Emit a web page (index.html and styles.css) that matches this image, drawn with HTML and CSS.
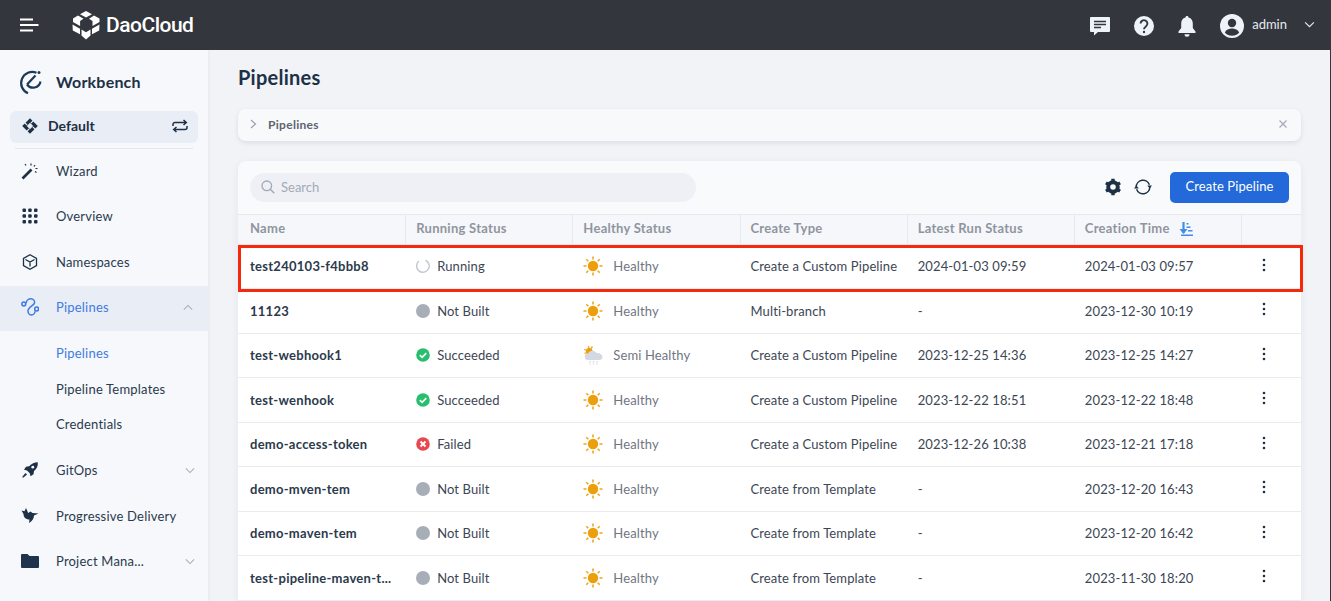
FILE: index.html
```html
<!DOCTYPE html>
<html lang="en">
<head>
    <meta charset="UTF-8">
    <title>Pipelines</title>
    <link rel="stylesheet" href="styles.css">
</head>
<body>
    <svg class="defs" width="0" height="0">
        <symbol id="sun" viewBox="0 0 20 20">
            <circle cx="10" cy="10" r="5.2" fill="#eb9f0c"/>
            <path d="M10 .5v3M10 16.5v3M.5 10h3M16.5 10h3M3.300 3.300l2 2M14.700 14.700l2 2M3.300 16.700l2-2M14.700 5.300l2-2" stroke="#eda622" stroke-width="1.6" fill="none"/>
        </symbol>
        <symbol id="kebab" viewBox="0 0 4 14">
            <circle cx="2" cy="2" r="1.3"/><circle cx="2" cy="7" r="1.3"/><circle cx="2" cy="12" r="1.3"/>
        </symbol>
        <symbol id="chev" viewBox="0 0 12 8">
            <path d="M1 1.500l5 5 5-5" fill="none" stroke="currentColor" stroke-width="1.3"/>
        </symbol>
    </svg>

    <header class="topbar">
        <svg class="menu-icon" viewBox="0 0 19 14" width="19" height="14"><path d="M0 1.500h13M0 7h18.500M0 12.500h13" stroke="#fff" stroke-width="1.8"/></svg>
        <svg class="logo" viewBox="0 0 28 29" width="28" height="29">
            <path d="M14 0l6 3.200-6 3.400-6-3.400zM6 4.600l5.500 3.200-3.400 2.200v5L1 11V7.600zM22 4.600l5.500 3V11l-7 4v-5L17 7.800zM.5 13.400l7.500 4.400v5.500L.8 19.500zM27.500 13.400l-.3 6.100-7.200 3.800v-5.500zM9.500 18.600l4.500 2.600 4.500-2.600v5.800L14 28.600l-4.500-4.200z" fill="#fff"/>
        </svg>
        <span class="brand">DaoCloud</span>
        <div class="top-right">
            <svg class="top-icon" viewBox="0 0 22 20" width="22" height="20"><path d="M2 1h18a1 1 0 0 1 1 1v13a1 1 0 0 1-1 1H9l-4 3.500V16H2a1 1 0 0 1-1-1V2a1 1 0 0 1 1-1z" fill="#eef3fa"/><path d="M5 5.500h12M5 8.500h12M5 11.500h7" stroke="#33363c" stroke-width="1.5"/></svg>
            <svg class="top-icon" viewBox="0 0 20 20" width="20" height="20"><circle cx="10" cy="10" r="10" fill="#eef3fa"/><path d="M6.600 7.600a3.400 3.400 0 1 1 5.300 2.800c-1.300.9-1.900 1.300-1.900 2.800" fill="none" stroke="#33363c" stroke-width="1.9"/><circle cx="10" cy="16" r="1.2" fill="#33363c"/></svg>
            <svg class="top-icon" viewBox="0 0 20 22" width="20" height="22"><path d="M10 1c.9 0 1.500.6 1.500 1.400 3 .7 4.300 3.100 4.300 6V13l2.700 3.500V18H1.500v-1.500L4.200 13V8.400c0-2.900 1.300-5.300 4.300-6C8.500 1.600 9.100 1 10 1z" fill="#eef3fa"/><path d="M7.500 19.200h5a2.500 2.500 0 0 1-5 0z" fill="#eef3fa"/></svg>
            <svg class="avatar" viewBox="0 0 24 24" width="24" height="24"><circle cx="12" cy="12" r="12" fill="#eef3fa"/><circle cx="12" cy="9" r="4.200" fill="#33363c"/><path d="M4.800 18.500c1.500-3 4-4 7.200-4s5.700 1 7.200 4a9.500 9.500 0 0 1-14.400 0z" fill="#33363c"/></svg>
            <span class="user">admin</span>
            <svg class="user-chev" width="11" height="7"><use href="#chev"/></svg>
        </div>
    </header>

    <div class="layout">
        <aside class="sidebar">
            <div class="product">
                <svg viewBox="0 0 26 26" width="26" height="26"><path d="M19.500 3.800A11 11 0 1 0 11 24.300" fill="none" stroke="#1c3a57" stroke-width="2.200"/><path d="M10 15.500a7.500 7.500 0 0 0 13.500-3" fill="none" stroke="#1c3a57" stroke-width="2.200"/><path d="M10 15.500l8.500-9" stroke="#1c3a57" stroke-width="2.200"/><circle cx="22" cy="3.500" r="1.500" fill="#1c3a57"/></svg>
                <span>Workbench</span>
            </div>
            <div class="workspace">
                <svg viewBox="0 0 16 16" width="16" height="16"><path d="M8 .2L15.800 8 8 15.800.2 8z" fill="#1d3045"/><path d="M8 4.800L11.200 8 8 11.200 4.800 8z" fill="#e9edf5"/><path d="M11.500 2.500L8.800 5.200M4.500 13.500l2.700-2.700M2.500 4.500l2.700 2.700M13.500 11.500l-2.700-2.700" stroke="#e9edf5" stroke-width="1.100"/></svg>
                <span>Default</span>
                <svg class="swap" viewBox="0 0 16 14" width="16" height="14"><path d="M1 7V5.500a2 2 0 0 1 2-2h11M11.500 1l2.800 2.500L11.500 6M15 7v1.500a2 2 0 0 1-2 2H2M4.500 8L1.700 10.500 4.500 13" fill="none" stroke="#1d3045" stroke-width="1.500"/></svg>
            </div>
            <nav class="nav">
                <a class="nav-item">
                    <svg viewBox="0 0 18 18" width="18" height="18"><path d="M1.500 16.500l9-9" stroke="#1d3045" stroke-width="2.600"/><path d="M10 1.500v2M14 3l-1 1.500M16.500 6.500h-2M4 2l1 1.500M15.500 10.500l-1.500-1" stroke="#1d3045" stroke-width="1.200" fill="none"/></svg>
                    <span>Wizard</span>
                </a>
                <a class="nav-item">
                    <svg viewBox="0 0 16 16" width="16" height="16" fill="#1d3045"><rect x=".5" y=".5" width="3.500" height="3.500" rx="1"/><rect x="6.200" y=".5" width="3.500" height="3.500" rx="1"/><rect x="12" y=".5" width="3.500" height="3.500" rx="1"/><rect x=".5" y="6.200" width="3.500" height="3.500" rx="1"/><rect x="6.200" y="6.200" width="3.500" height="3.500" rx="1"/><rect x="12" y="6.200" width="3.500" height="3.500" rx="1"/><rect x=".5" y="12" width="3.500" height="3.500" rx="1"/><rect x="6.200" y="12" width="3.500" height="3.500" rx="1"/><rect x="12" y="12" width="3.500" height="3.500" rx="1"/></svg>
                    <span>Overview</span>
                </a>
                <a class="nav-item">
                    <svg viewBox="0 0 16 16" width="16" height="16"><path d="M8 .8l6.500 3.600v7.200L8 15.200l-6.500-3.600V4.400zM3.500 5.500L8 8l4.500-2.500M8 8v4.500" fill="none" stroke="#1d3045" stroke-width="1.300"/></svg>
                    <span>Namespaces</span>
                </a>
                <a class="nav-item active">
                    <svg viewBox="0 0 18 18" width="18" height="18"><g fill="none" stroke="#3d7be0" stroke-width="1.500"><circle cx="2.800" cy="6" r="1.900"/><circle cx="15.600" cy="11" r="1.900"/><path d="M5.200 5.200C5.200 2 8 .8 10 .8 12.500.8 14 3 13.500 5 13 7.500 7 9 7 13c0 2.500 2 4 3.500 4 2 0 3.500-2 3.500-3.800"/></g></svg>
                    <span>Pipelines</span>
                    <svg class="nav-chev up" width="10" height="7"><use href="#chev"/></svg>
                </a>
                <div class="sub-nav">
                    <a class="sub-item current">Pipelines</a>
                    <a class="sub-item">Pipeline Templates</a>
                    <a class="sub-item">Credentials</a>
                </div>
                <a class="nav-item">
                    <svg viewBox="0 0 16 16" width="16" height="16"><path d="M15.800.2c.3 3.800-1 6.800-3.800 8.800l-.5 3.200-3 2-.7-3-2.800-2.800-3-.7 2-3 3.200-.5C9 2 12 .2 15.800.2z" fill="#1d3045"/><circle cx="10.800" cy="5.200" r="1.400" fill="#f6f8fc"/><path d="M3.500 11l1.500 1.500L1.500 15.500H.5v-1z" fill="#1d3045"/></svg>
                    <span>GitOps</span>
                    <svg class="nav-chev" width="10" height="7"><use href="#chev"/></svg>
                </a>
                <a class="nav-item">
                    <svg viewBox="0 0 17 15" width="17" height="15"><path d="M0 2.500l3 .8L4.500 0l2.200 5 2.300-1.500L11 5l6 .5-4.500 2c0 3-2 6-5 7.500l.5-3.500C4 11.500 2 9 2 6z" fill="#1d3045"/></svg>
                    <span>Progressive Delivery</span>
                </a>
                <a class="nav-item">
                    <svg viewBox="0 0 18 14" width="18" height="14"><path d="M1 0h5.500l2 2H17a1 1 0 0 1 1 1v10a1 1 0 0 1-1 1H1a1 1 0 0 1-1-1V1a1 1 0 0 1 1-1z" fill="#1f344c"/></svg>
                    <span>Project Mana...</span>
                    <svg class="nav-chev" width="10" height="7"><use href="#chev"/></svg>
                </a>
            </nav>
        </aside>

        <main class="content">
            <h1>Pipelines</h1>
            <div class="crumb">
                <svg viewBox="0 0 7 10" width="7" height="10"><path d="M1 1l4.500 4L1 9" fill="none" stroke="#9aa1ac" stroke-width="1.200"/></svg>
                <span>Pipelines</span>
                <svg class="crumb-close" viewBox="0 0 8 8" width="8" height="8"><path d="M.5.500l7 7M7.500.500l-7 7" stroke="#a9afb9" stroke-width="1.400"/></svg>
            </div>

            <section class="card">
                <div class="toolbar">
                    <div class="search">
                        <svg viewBox="0 0 14 14" width="14" height="14"><circle cx="5.800" cy="5.800" r="4.800" fill="none" stroke="#a3aab5" stroke-width="1.300"/><path d="M9.300 9.300l4 4" stroke="#a3aab5" stroke-width="1.500"/></svg>
                        <span>Search</span>
                    </div>
                    <svg class="gear" viewBox="0 0 18 18" width="18" height="18"><circle cx="9" cy="9" r="4.800" fill="none" stroke="#1d3045" stroke-width="4"/><path d="M9 .8v3M9 14.200v3M1.900 4.900l2.600 1.500M13.500 11.600l2.600 1.500M1.900 13.100l2.600-1.500M13.500 6.400l2.600-1.500" stroke="#1d3045" stroke-width="3.400"/></svg>
                    <svg class="refresh" viewBox="0 0 18 18" width="18" height="18"><path d="M2.200 9a6.800 6.800 0 0 1 13.200-2.300M15.800 9a6.800 6.800 0 0 1-13.200 2.300" fill="none" stroke="#1d3045" stroke-width="1.500"/><path d="M13.300 7.400h4.800L15.700 10.600zM.0 10.600h4.800L2.400 7.400z" fill="#1d3045"/></svg>
                    <button class="create">Create Pipeline</button>
                </div>

                <div class="row head">
                    <div>Name</div>
                    <div>Running Status</div>
                    <div>Healthy Status</div>
                    <div>Create Type</div>
                    <div>Latest Run Status</div>
                    <div>Creation Time
                        <svg class="sort" viewBox="0 0 14 14" width="14" height="14"><path d="M4.500 0v11" stroke="#3f8fe8" stroke-width="2.200"/><path d="M.5 7l4 5 4-5z" fill="#3f8fe8"/><path d="M7.500 1h2v1.500h-2zM7.500 4.500h4V6h-4zM9 8h4.500v1.500H9zM2 12.500h12V14H2z" fill="#3f8fe8"/></svg>
                    </div>
                    <div></div>
                </div>

                <div class="row">
                    <div class="name">test240103-f4bbb8</div>
                    <div class="status"><svg class="st" viewBox="0 0 14 14" width="14" height="14"><path d="M9.500 1.200A6.300 6.300 0 1 1 3 2" fill="none" stroke="#c5cad3" stroke-width="1.500"/></svg>Running</div>
                    <div class="health"><svg width="20" height="20"><use href="#sun"/></svg>Healthy</div>
                    <div>Create a Custom Pipeline</div>
                    <div>2024-01-03 09:59</div>
                    <div>2024-01-03 09:57</div>
                    <div class="more"><svg width="4" height="14"><use href="#kebab"/></svg></div>
                </div>
                <div class="row">
                    <div class="name">11123</div>
                    <div class="status"><span class="dot"></span>Not Built</div>
                    <div class="health"><svg width="20" height="20"><use href="#sun"/></svg>Healthy</div>
                    <div>Multi-branch</div>
                    <div>-</div>
                    <div>2023-12-30 10:19</div>
                    <div class="more"><svg width="4" height="14"><use href="#kebab"/></svg></div>
                </div>
                <div class="row">
                    <div class="name">test-webhook1</div>
                    <div class="status"><svg class="st" viewBox="0 0 14 14" width="14" height="14"><circle cx="7" cy="7" r="6.800" fill="#27bf6d"/><path d="M3.800 7.200l2.300 2.200 4.200-4.300" fill="none" stroke="#fff" stroke-width="1.700"/></svg>Succeeded</div>
                    <div class="health"><svg viewBox="0 0 20 20" width="20" height="20"><path d="M1 4.500l3 1M5.500 1l.5 3M1.500 8.500l2-1M9.500 1.500L8 3.500" stroke="#eda622" stroke-width="1.300"/><circle cx="6.200" cy="6.300" r="3.300" fill="#eb9f0c"/><path d="M5 15a3.200 3.200 0 0 1 0-6.400C6 5.500 11.500 4.500 13.500 8c3-.5 6 1.500 6 4 0 2-1.500 3-3 3z" fill="#d3d8e3"/><path d="M7 16v3.500M10.500 16v3.500M14 16v3.500" stroke="#d3d8e3" stroke-width="1.300" stroke-dasharray="1.500 1"/></svg>Semi Healthy</div>
                    <div>Create a Custom Pipeline</div>
                    <div>2023-12-25 14:36</div>
                    <div>2023-12-25 14:27</div>
                    <div class="more"><svg width="4" height="14"><use href="#kebab"/></svg></div>
                </div>
                <div class="row">
                    <div class="name">test-wenhook</div>
                    <div class="status"><svg class="st" viewBox="0 0 14 14" width="14" height="14"><circle cx="7" cy="7" r="6.800" fill="#27bf6d"/><path d="M3.800 7.200l2.300 2.200 4.200-4.300" fill="none" stroke="#fff" stroke-width="1.700"/></svg>Succeeded</div>
                    <div class="health"><svg width="20" height="20"><use href="#sun"/></svg>Healthy</div>
                    <div>Create a Custom Pipeline</div>
                    <div>2023-12-22 18:51</div>
                    <div>2023-12-22 18:48</div>
                    <div class="more"><svg width="4" height="14"><use href="#kebab"/></svg></div>
                </div>
                <div class="row">
                    <div class="name">demo-access-token</div>
                    <div class="status"><svg class="st" viewBox="0 0 14 14" width="14" height="14"><circle cx="7" cy="7" r="6.800" fill="#e8474f"/><path d="M4.500 4.500l5 5M9.500 4.500l-5 5" stroke="#fff" stroke-width="1.900"/></svg>Failed</div>
                    <div class="health"><svg width="20" height="20"><use href="#sun"/></svg>Healthy</div>
                    <div>Create a Custom Pipeline</div>
                    <div>2023-12-26 10:38</div>
                    <div>2023-12-21 17:18</div>
                    <div class="more"><svg width="4" height="14"><use href="#kebab"/></svg></div>
                </div>
                <div class="row">
                    <div class="name">demo-mven-tem</div>
                    <div class="status"><span class="dot"></span>Not Built</div>
                    <div class="health"><svg width="20" height="20"><use href="#sun"/></svg>Healthy</div>
                    <div>Create from Template</div>
                    <div>-</div>
                    <div>2023-12-20 16:43</div>
                    <div class="more"><svg width="4" height="14"><use href="#kebab"/></svg></div>
                </div>
                <div class="row">
                    <div class="name">demo-maven-tem</div>
                    <div class="status"><span class="dot"></span>Not Built</div>
                    <div class="health"><svg width="20" height="20"><use href="#sun"/></svg>Healthy</div>
                    <div>Create from Template</div>
                    <div>-</div>
                    <div>2023-12-20 16:42</div>
                    <div class="more"><svg width="4" height="14"><use href="#kebab"/></svg></div>
                </div>
                <div class="row">
                    <div class="name">test-pipeline-maven-t...</div>
                    <div class="status"><span class="dot"></span>Not Built</div>
                    <div class="health"><svg width="20" height="20"><use href="#sun"/></svg>Healthy</div>
                    <div>Create from Template</div>
                    <div>-</div>
                    <div>2023-11-30 18:20</div>
                    <div class="more"><svg width="4" height="14"><use href="#kebab"/></svg></div>
                </div>
                <div class="highlight"></div>
            </section>
        </main>
    </div>
</body>
</html>
```

FILE: styles.css
```css
html, body {
    height: 100%;
}
body {
    margin: 0;
    overflow: hidden;
    font-family: "Lato", "Noto Sans", sans-serif;
    font-size: 13px;
    color: #3c4654;
    background-color: #f1f3f7;
    border-right: 1px solid #33363c;
    box-sizing: border-box;
}
.defs {
    position: absolute;
}

/* top bar */
.topbar {
    display: flex;
    align-items: center;
    height: 50px;
    padding-left: 20px;
    background-color: #33363c;
    color: #fff;
}
.logo {
    margin-left: 33px;
}
.brand {
    margin-left: 6px;
    font-family: "Roboto", sans-serif;
    font-size: 21px;
    font-weight: 500;
    letter-spacing: -0.5px;
}
.top-right {
    display: flex;
    align-items: center;
    margin-left: auto;
    margin-right: 15px;
}
.top-icon {
    margin-top: 2px;
    margin-right: 23px;
}
.avatar {
    margin-top: 2px;
}
.user {
    margin-left: 8px;
    margin-right: 17px;
    padding-bottom: 2px;
    color: #e6ebf3;
}
.user-chev {
    margin-bottom: 2px;
    color: #e6ebf3;
}

.layout {
    display: flex;
    height: 551px;
}

/* sidebar */
.sidebar {
    width: 208px;
    flex-shrink: 0;
    background-color: #f6f8fc;
    box-shadow: 1px 0 3px rgba(30, 40, 60, 0.05);
}
.product {
    display: flex;
    align-items: center;
    gap: 13px;
    height: 61px;
    padding: 2px 0 0 17px;
    box-sizing: border-box;
    color: #1d3045;
    font-size: 16px;
    font-weight: 700;
    letter-spacing: 0.2px;
}
.workspace {
    display: flex;
    align-items: center;
    gap: 10px;
    height: 32px;
    margin: 0 10px;
    padding: 0 10px 3px 12px;
    box-sizing: border-box;
    border-radius: 6px;
    background-color: #e9edf5;
    color: #1d3045;
    font-size: 14px;
    font-weight: 700;
}
.swap {
    margin-left: auto;
}
.nav {
    margin-top: 5px;
    letter-spacing: 0.2px;
}
.nav::before {
    content: "";
    display: block;
    height: 1px;
    margin: 0 15px;
    background-color: #e3e7f0;
}
.nav-item {
    display: flex;
    align-items: center;
    height: 45.5px;
    padding: 0 0 2px 21px;
    box-sizing: border-box;
    color: #2b3a4c;
}
.nav-item > svg:first-child {
    width: 18px;
    margin-right: 17px;
}
.nav-item.active {
    background-color: #e9edf5;
    color: #3f7be0;
}
.nav-chev {
    margin-left: auto;
    margin-right: 13px;
    color: #a9b0bb;
}
.nav-chev.up {
    transform: rotate(180deg);
    margin-right: 15px;
}
.sub-nav {
    padding: 4.25px 0 6.5px;
}
.sub-item {
    display: flex;
    align-items: center;
    height: 35.5px;
    padding-left: 56px;
    color: #2b3a4c;
}
.sub-item.current {
    color: #3f7be0;
}

/* main area */
.content {
    flex: 1;
    min-width: 0;
    padding: 13px 29px 0 30px;
}
h1 {
    margin: 0 0 18px;
    color: #1d3045;
    font-size: 20px;
    line-height: 28px;
    font-weight: 700;
    letter-spacing: 0.25px;
}
.crumb {
    display: flex;
    align-items: center;
    gap: 11px;
    height: 32px;
    padding: 0 14px 2px 12px;
    box-sizing: border-box;
    border-radius: 8px;
    background-color: #f8f9fb;
    box-shadow: 0 2px 5px rgba(30, 40, 60, 0.1);
    color: #5c6470;
    font-size: 12px;
    font-weight: 700;
    letter-spacing: 0.3px;
}
.crumb-close {
    margin-left: auto;
}

.card {
    position: relative;
    margin-top: 20px;
    border-radius: 8px 8px 0 0;
    background-color: #f9fafc;
    box-shadow: 0 2px 8px rgba(30, 40, 60, 0.06);
}
.toolbar {
    display: flex;
    align-items: center;
    height: 53px;
    padding: 0 12px;
}
.search {
    display: flex;
    align-items: center;
    gap: 6px;
    width: 446px;
    height: 29px;
    padding: 0 0 2px 11px;
    box-sizing: border-box;
    border-radius: 15px;
    background-color: #eef0f5;
    color: #a3aab5;
}
.gear {
    margin-left: auto;
    margin-bottom: 2px;
}
.refresh {
    margin-left: 12px;
    margin-bottom: 2px;
}
.create {
    height: 31px;
    width: 119px;
    margin-left: 18px;
    padding: 0 0 3px;
    border: none;
    border-radius: 5px;
    background-color: #2369d9;
    color: #fff;
    font: inherit;
    letter-spacing: 0.1px;
}

/* table rows */
.row {
    display: grid;
    grid-template-columns: repeat(6, 1fr) 60px;
    align-items: center;
    height: 44.5px;
    padding-bottom: 0.5px;
    border-bottom: 1px solid #e9ebef;
    box-sizing: border-box;
    background-color: #fff;
    letter-spacing: 0.12px;
}
.row > div {
    display: flex;
    align-items: center;
    padding-left: 11px;
    white-space: nowrap;
}
.row.head {
    height: 30.5px;
    padding-bottom: 0;
    border-top: 1px solid #e6e9f2;
    border-bottom: 1px solid #e6e9f2;
    align-items: stretch;
    background-color: #f6f7fa;
    color: #8f959f;
    font-weight: 700;
    letter-spacing: 0.27px;
}
.row.head > div {
    padding-bottom: 2px;
}
.row.head > div + div {
    padding-left: 10px;
    border-left: 1px solid #e6e9f2;
}
.row > div:first-child {
    padding-left: 12px;
}
.sort {
    margin-left: 9px;
    margin-top: 2px;
}
.row .name {
    color: #2b3a4c;
    font-weight: 700;
    letter-spacing: 0.27px;
}
.status {
    gap: 7px;
}
.dot {
    width: 14px;
    height: 14px;
    border-radius: 50%;
    background-color: #a8aeb8;
}
.health {
    gap: 10px;
    color: #6f7683;
}
.row .more {
    padding-left: 21px;
    fill: #1d3045;
}
.more svg {
    margin-bottom: 3px;
}

/* red annotation round the first row */
.highlight {
    position: absolute;
    top: 84px;
    left: 0;
    right: -2px;
    height: 47px;
    border: 3px solid #f52a0c;
    box-sizing: border-box;
}
```
